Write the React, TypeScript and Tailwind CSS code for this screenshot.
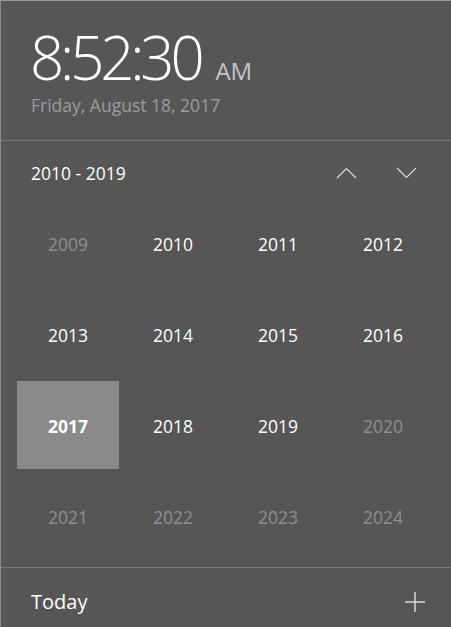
import React from "react";

const years: { y: string; dim?: boolean; sel?: boolean }[] = [
  { y: "2009", dim: true }, { y: "2010" }, { y: "2011" }, { y: "2012" },
  { y: "2013" }, { y: "2014" }, { y: "2015" }, { y: "2016" },
  { y: "2017", sel: true }, { y: "2018" }, { y: "2019" }, { y: "2020", dim: true },
  { y: "2021", dim: true }, { y: "2022", dim: true }, { y: "2023", dim: true }, { y: "2024", dim: true },
];

export default function App() {
  return (
    <div
      className="w-[451px] h-[627px] bg-[#565656] border-t border-l border-t-[#9a9a9a] border-l-[#8c8c8c] overflow-hidden flex flex-col"
      style={{ fontFamily: '"Segoe UI", "Open Sans", sans-serif' }}
    >
      <div className="h-[139px] pl-[29px] pt-[26px] flex flex-col">
        <div className="flex items-baseline">
          <span className="text-[60px] font-light text-white leading-[60px] tracking-[-4.2px]">8:52:30</span>
          <span className="ml-[15px] text-[24px] leading-[28px] text-[#c4c4c4] font-normal">AM</span>
        </div>
        <div className="mt-[6px] pl-[1px] text-[17.5px] text-[#9c9c9c] leading-[24px]">Friday, August 18, 2017</div>
      </div>
      <div className="h-px bg-[#787878]" />
      <div className="h-[58px] flex items-center pl-[30px] pr-[34px] pt-[6px]">
        <span className="text-[17.5px] text-white">2010 - 2019</span>
        <div className="ml-auto flex items-center gap-[39px]">
          <svg width="21" height="12" viewBox="0 0 21 12" fill="none" stroke="#dcdcdc" strokeWidth="1.2">
            <path d="M1 11 L10.5 1.5 L20 11" />
          </svg>
          <svg width="21" height="12" viewBox="0 0 21 12" fill="none" stroke="#dcdcdc" strokeWidth="1.2">
            <path d="M1 1 L10.5 10.5 L20 1" />
          </svg>
        </div>
      </div>
      <div className="pl-[16px] grid grid-cols-[repeat(4,102px)] gap-[3px] auto-rows-[88px]">
        {years.map((it) => (
          <div
            key={it.y}
            className={
              "flex items-center justify-center pt-[3px] text-[17.5px] " +
              (it.sel ? "bg-[#8a8a8a] text-white font-bold" : it.dim ? "text-[#8e8e8e]" : "text-white")
            }
          >
            {it.y}
          </div>
        ))}
      </div>
      <div className="mt-[7px] h-px bg-[#787878]" />
      <div className="flex-1 flex items-center pl-[30px] pr-[26px] pt-[8px]">
        <span className="text-[20px] text-white">Today</span>
        <svg className="ml-auto" width="20" height="20" viewBox="0 0 20 20" stroke="#d8d8d8" strokeWidth="1.5">
          <path d="M10 0 V20 M0 10 H20" />
        </svg>
      </div>
    </div>
  );
}
